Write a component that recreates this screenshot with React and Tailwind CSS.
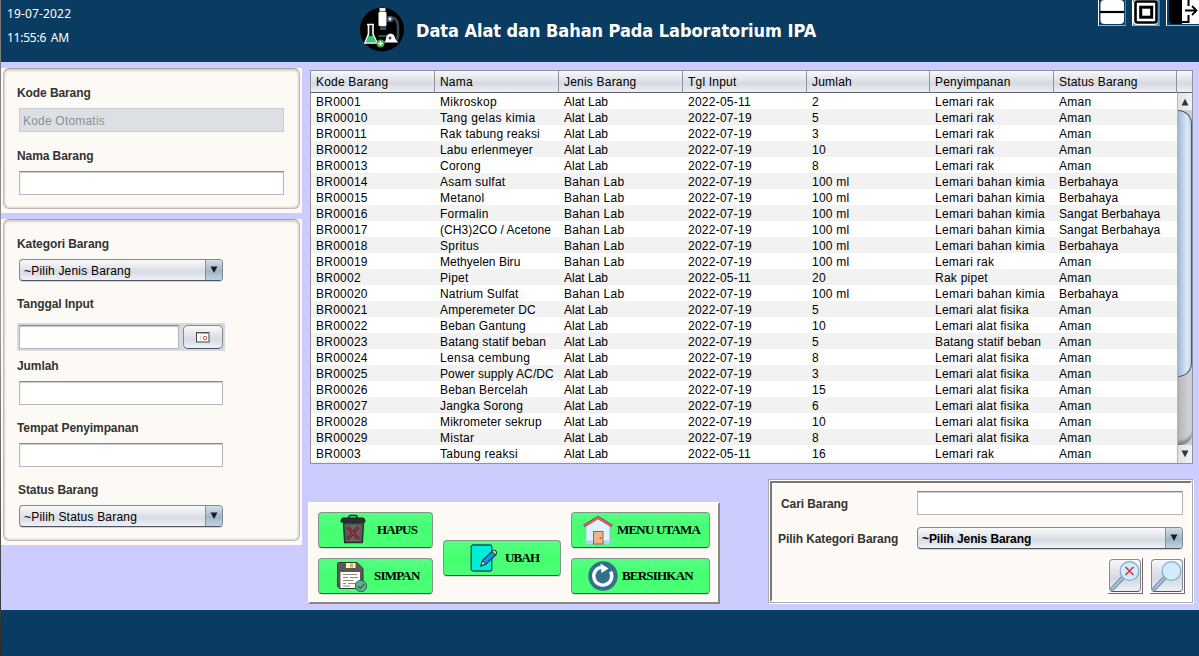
import React from "react";

const rows = [
  ["BR0001", "Mikroskop", "Alat Lab", "2022-05-11", "2", "Lemari rak", "Aman"],
  ["BR00010", "Tang gelas kimia", "Alat Lab", "2022-07-19", "5", "Lemari rak", "Aman"],
  ["BR00011", "Rak tabung reaksi", "Alat Lab", "2022-07-19", "3", "Lemari rak", "Aman"],
  ["BR00012", "Labu erlenmeyer", "Alat Lab", "2022-07-19", "10", "Lemari rak", "Aman"],
  ["BR00013", "Corong", "Alat Lab", "2022-07-19", "8", "Lemari rak", "Aman"],
  ["BR00014", "Asam sulfat", "Bahan Lab", "2022-07-19", "100 ml", "Lemari bahan kimia", "Berbahaya"],
  ["BR00015", "Metanol", "Bahan Lab", "2022-07-19", "100 ml", "Lemari bahan kimia", "Berbahaya"],
  ["BR00016", "Formalin", "Bahan Lab", "2022-07-19", "100 ml", "Lemari bahan kimia", "Sangat Berbahaya"],
  ["BR00017", "(CH3)2CO / Acetone", "Bahan Lab", "2022-07-19", "100 ml", "Lemari bahan kimia", "Sangat Berbahaya"],
  ["BR00018", "Spritus", "Bahan Lab", "2022-07-19", "100 ml", "Lemari bahan kimia", "Berbahaya"],
  ["BR00019", "Methyelen Biru", "Bahan Lab", "2022-07-19", "100 ml", "Lemari rak", "Aman"],
  ["BR0002", "Pipet", "Alat Lab", "2022-05-11", "20", "Rak pipet", "Aman"],
  ["BR00020", "Natrium Sulfat", "Bahan Lab", "2022-07-19", "100 ml", "Lemari bahan kimia", "Berbahaya"],
  ["BR00021", "Amperemeter DC", "Alat Lab", "2022-07-19", "5", "Lemari alat fisika", "Aman"],
  ["BR00022", "Beban Gantung", "Alat Lab", "2022-07-19", "10", "Lemari alat fisika", "Aman"],
  ["BR00023", "Batang statif beban", "Alat Lab", "2022-07-19", "5", "Batang statif beban", "Aman"],
  ["BR00024", "Lensa cembung", "Alat Lab", "2022-07-19", "8", "Lemari alat fisika", "Aman"],
  ["BR00025", "Power supply AC/DC", "Alat Lab", "2022-07-19", "3", "Lemari alat fisika", "Aman"],
  ["BR00026", "Beban Bercelah", "Alat Lab", "2022-07-19", "15", "Lemari alat fisika", "Aman"],
  ["BR00027", "Jangka Sorong", "Alat Lab", "2022-07-19", "6", "Lemari alat fisika", "Aman"],
  ["BR00028", "Mikrometer sekrup", "Alat Lab", "2022-07-19", "10", "Lemari alat fisika", "Aman"],
  ["BR00029", "Mistar", "Alat Lab", "2022-07-19", "8", "Lemari alat fisika", "Aman"],
  ["BR0003", "Tabung reaksi", "Alat Lab", "2022-05-11", "16", "Lemari rak", "Aman"],
];

const headers = ["Kode Barang", "Nama", "Jenis Barang", "Tgl Input", "Jumlah", "Penyimpanan", "Status Barang"];
const gridCols = "grid grid-cols-[124px_124px_124px_124px_123px_124px_123px]";

const tracking = {
  "Lemari bahan kimia": "tracking-[0.29px]",
  "Alat Lab": "tracking-[0px]",
  "Lemari rak": "tracking-[0.25px]",
  "Lemari alat fisika": "tracking-[0.21px]",
  "Tang gelas kimia": "tracking-[0.38px]",
  "Rak tabung reaksi": "tracking-[0.19px]",
  "Labu erlenmeyer": "tracking-[0.2px]",
  "(CH3)2CO / Acetone": "tracking-[0.05px]",
  "Methyelen Biru": "tracking-[0.02px]",
  "Natrium Sulfat": "tracking-[0.18px]",
  "Amperemeter DC": "tracking-[0.18px]",
  "Beban Gantung": "tracking-[0.14px]",
  "Batang statif beban": "tracking-[0.14px]",
  "Lensa cembung": "tracking-[0.38px]",
  "Power supply AC/DC": "tracking-[0.1px]",
  "Beban Bercelah": "tracking-[0.18px]",
  "Jangka Sorong": "tracking-[0.18px]",
  "Mikrometer sekrup": "tracking-[0.14px]",
  "Sangat Berbahaya": "tracking-[0.12px]",
  "Berbahaya": "tracking-[0.14px]",
};

function Label({ children, className = "" }) {
  return <div className={`h-4 text-[12px] font-bold leading-4 text-[#333] whitespace-nowrap ${className}`}><span className="tracking-[-0.09px]">{children}</span></div>;
}

function Field({ className = "" }) {
  return (
    <div className={`h-6 border border-[#b5b7bb] border-t-[#85888e] bg-white shadow-[inset_0_1px_1px_#c9cbce] ${className}`} />
  );
}

function Combo({ text, className = "", bold = false }) {
  return (
    <div className={`flex h-[22px] overflow-hidden rounded-[4px] border border-[#85898f] border-b-[#4d5463] bg-linear-to-b from-[#f9fafb] via-[#d8dbe2] via-60% to-[#eef1f6] shadow-[0_1px_0_#d0d2d6] ${className}`}>
      <div className={`flex-1 pl-1 text-[12px] leading-[22px] text-black whitespace-nowrap ${bold ? "font-bold tracking-[-0.1px]" : "tracking-[0.2px]"}`}>{text}</div>
      <div className="flex w-[17px] items-center justify-center border-l border-[#7795b0] bg-linear-to-b from-[#d3dfe9] via-[#9fb5c9] via-55% to-[#bdd3e6]">
        <svg width="8" height="8" viewBox="0 0 8 8"><path d="M0.5 0.5h7L4 7z" fill="#1c1c1c" /></svg>
      </div>
    </div>
  );
}

function Panel({ children, className = "" }) {
  return (
    <div className={`bg-[#fdfaf5] pr-[2px] pl-[2px] ${className}`}>
      <div className="h-full rounded-[6px] border border-[#bdb9b5] border-t-[#a5a19e] bg-[#fdfaf5] pl-[13px] shadow-[inset_0_2px_2px_#d5d1cd,inset_1px_-1px_2px_#dcd8d4,inset_-1px_0_2px_#dcd8d4]">
        {children}
      </div>
    </div>
  );
}

function GreenButton({ icon, children, className = "" }) {
  return (
    <div className={`flex h-9 items-center rounded-[4px] border border-[#7f9688] border-b-[#4a5060] bg-linear-to-b from-[#55ff82] via-[#44ff70] via-50% to-[#4cff79] font-['Liberation_Serif',serif] text-[13px] font-bold text-black shadow-[0_1px_0_#dcdad6] ${className}`}>
      {icon}
      <span className="whitespace-nowrap leading-4 tracking-[-0.8px]">{children}</span>
    </div>
  );
}

const TrashIcon = () => (
  <svg className="mr-[10px] shrink-0" width="27" height="32" viewBox="0 0 27 32">
    <path d="M9 4.500V2.500Q9 1.500 10.500 1.500h5Q17 1.500 17 2.500V4.500" fill="none" stroke="#222" strokeWidth="1.400" />
    <path d="M3.500 9h20L22.300 28.500H4.700z" fill="#5a5a5a" stroke="#2a2a2a" strokeWidth="1.400" />
    <path d="M7 11h13L19 27H8z" fill="#646464" />
    <path d="M2.500 4h21l1.500 2.500V8h-24V6.500z" fill="#2f3133" stroke="#1c1c1c" />
    <path d="M7.500 13l11 12M18.500 13l-11 12" stroke="#2d1518" strokeWidth="2.600" />
    <path d="M7.500 13l11 12M18.500 13l-11 12" stroke="#c8324a" strokeWidth="1.300" />
  </svg>
);

const FloppyIcon = () => (
  <svg className="mr-[6px] shrink-0" width="32" height="32" viewBox="0 0 32 32">
    <path d="M2.500 2.500H21l6 6v20H4L1.500 26.500V3.500z" fill="#5a5858" stroke="#343434" />
    <rect x="10" y="3" width="9.500" height="5" fill="#fff3ae" /><rect x="14" y="3.500" width="3" height="4" fill="#c9b45d" />
    <rect x="4.500" y="12" width="19.500" height="16" fill="#fffdf5" />
    <path d="M7 14.500h14M7 17.500h5m2 0h8M7 20.500h10M7 23.500h3m2 0h8M7 26h7" stroke="#8d8b86" />
    <circle cx="25" cy="26" r="5.700" fill="#58b28b" stroke="#37655a" />
    <path d="M22 26l2.300 2.300 4-4.300" fill="none" stroke="#315d52" strokeWidth="1.200" />
  </svg>
);

const EditIcon = () => (
  <svg className="mr-[7px] shrink-0" width="28" height="30" viewBox="0 0 28 30">
    <rect x="1.200" y="2" width="20.600" height="26" rx="2" fill="#00eed9" stroke="#0c5365" strokeWidth="1.300" />
    <path d="M13 17L22.500 8l3.500 3.500L16 21l-5 2z" fill="#1497e6" stroke="#0b395a" strokeWidth="1.200" />
    <path d="M12.500 17.500l3.300 3.500-5 2z" fill="#ffc568" stroke="#0b395a" />
    <path d="M22 8.500l1.800-1.500q3 .3 3 3l-1.600 1.800z" fill="#ffc94d" stroke="#0b395a" />
  </svg>
);

const HouseIcon = () => (
  <svg className="mr-1 shrink-0" width="30" height="32" viewBox="0 0 30 32">
    <path d="M3 12L15 3l12 9v18H3z" fill="#dff3ff" stroke="#9fc0d6" />
    <path d="M3.500 26.500h23v3h-23z" fill="#a6d5f3" />
    <rect x="10.500" y="17.500" width="9.500" height="12.500" fill="#f2b283" stroke="#95663f" />
    <circle cx="17.500" cy="24" r=".8" fill="#6b3c1d" />
    <path d="M1 12L15 3.500 29 12" fill="none" stroke="#88404a" strokeWidth="3" />
    <path d="M1.300 12L15 3.700 28.700 12" fill="none" stroke="#e7636b" strokeWidth="1.800" />
  </svg>
);

const RefreshIcon = () => (
  <svg className="mr-1 shrink-0" width="30" height="30" viewBox="0 0 30 30">
    <circle cx="15" cy="15" r="14.700" fill="#34708a" />
    <path d="M22.200 10A9 9 0 1 1 13.500 6.200" transform="rotate(4 15 15)" fill="none" stroke="#fff" strokeWidth="3.400" />
    <path d="M12.500 2.500l8 5-7 4.500z" fill="#fff" />
  </svg>
);

function SearchButton({ cross }) {
  return (
    <div className="h-[37px] w-9 border-t-2 border-r border-b border-l-2 border-white border-r-[#6c6c6c] border-b-[#6c6c6c] bg-[#fdfaf5]">
      <div className="h-[33px] w-[32px] rounded-[4px] border border-[#868a92] border-b-[#4d5463] bg-linear-to-b from-[#f7f8fa] via-[#d5d8e0] via-60% to-[#eceff5]">
        <svg width="30" height="31" viewBox="0 0 30 31">
          <path d="M2.500 28.500L13 17.500" stroke="#65879e" strokeWidth="4" strokeLinecap="round" />
          <path d="M2.500 28.500L13 17.500" stroke="#a9c4d6" strokeWidth="2.400" strokeLinecap="round" />
          <circle cx="19.500" cy="11" r="9.400" fill="#d2ecff" stroke="#84a9c3" strokeWidth="1.200" />
          {cross && <path d="M15.500 7l8 8M23.500 7l-8 8" stroke="#d23c40" strokeWidth="1.700" />}
        </svg>
      </div>
    </div>
  );
}

function Logo() {
  return (
    <svg className="ml-[288px] mt-[7px] shrink-0" width="44" height="45" viewBox="0 0 44 45">
      <circle cx="22" cy="22.500" r="22" fill="#000" />
      <path d="M32 11h2q4 3 4 8v9q0 4-3 6" fill="none" stroke="#34495a" strokeWidth="2.600" />
      <path d="M18.500 29h9M21 20h4v2h-4z" stroke="#3a4c5c" strokeWidth="2" fill="none" />
      <rect x="19.500" y="1" width="6" height="3.500" fill="#e9eef1" />
      <rect x="18.500" y="5" width="8" height="14" rx="1" fill="#fff" />
      <circle cx="30" cy="12" r="3.300" fill="#465b6b" /><circle cx="30" cy="12" r="1.400" fill="#fff" />
      <path d="M24 35.500l1.500-2q1-7 5-7t5 6l3 3z" fill="#fff" /><circle cx="30" cy="31" r="1.500" fill="#34495a" />
      <path d="M7 17.500h7M8.500 18v9L5 36h12l-4-9v-9" fill="#101820" stroke="#fff" strokeWidth="1.600" />
      <path d="M8.500 29h4.800l2.700 6H6z" fill="#2ecc71" />
      <circle cx="20.500" cy="36.500" r="4" fill="#43a847" />
      <path d="M18 36.500h5M20.500 34v5" stroke="#fff" strokeWidth="1.300" />
    </svg>
  );
}

function WindowButtons() {
  const box = "h-[26px] shrink-0 border-l border-b border-r border-l-white border-b-[#a9a9a9] border-r-[#77797b]";
  return (
    <div className="ml-auto flex h-[26px] gap-[6px]">
      <div className={`w-7 ${box}`}>
        <svg width="26" height="25" viewBox="0 0 26 25"><rect x="1.500" y="0" width="23.500" height="24" rx="4" fill="#fff" /><path d="M1 12h24" stroke="#000" strokeWidth="2.200" /></svg>
      </div>
      <div className={`w-7 ${box}`}>
        <svg width="26" height="25" viewBox="0 0 26 25">
          <rect width="26" height="25" fill="#4f8fc5" /><rect x="0" y="0" width="25" height="25" rx="4" fill="#fff" />
          <rect x="2.500" y="1.500" width="21" height="21" rx="2" fill="#fff" stroke="#000" strokeWidth="2.600" />
          <rect x="7.700" y="7.200" width="11" height="10" fill="#fff" stroke="#000" strokeWidth="3" />
        </svg>
      </div>
      <div className="h-[26px] w-[33px] border-b border-l border-b-[#a9a9a9] border-l-white">
        <svg width="32" height="25" viewBox="0 0 32 25">
          <rect x="12" y="-2" width="22" height="26" rx="4" fill="#fff" />
          <path d="M2 0h13v24H6q-3 0-4-4z" fill="#000" />
          <path d="M21.500 0v6M15 22h6.500v-7" fill="none" stroke="#000" strokeWidth="2" />
          <path d="M18 10.500h11M25 6l4.500 4.500-4.500 4.500" fill="none" stroke="#000" strokeWidth="1.800" />
        </svg>
      </div>
    </div>
  );
}

function Scrollbar() {
  return (
    <div className="flex w-[15px] flex-col border-l border-[#b3b5ba] bg-[#cdced4]">
      <div className="flex h-[17px] items-center justify-center bg-linear-to-r from-[#dfe1e5] to-[#f2f3f5]">
        <svg width="8" height="8" viewBox="0 0 8 8"><path d="M.5 7.500h7L4 .8z" fill="#333" /></svg>
      </div>
      <div className="h-[267px] rounded-r-[14px] border-t border-r border-b border-[#3c5870] bg-linear-to-r from-[#9fb9d0] via-[#dbeaf7] via-70% to-[#b9d3ea]" />
      <div className="flex-1 rounded-br-[12px] border-b border-[#777] bg-linear-to-r from-[#b5b6bb] to-[#d6d7dc] shadow-[inset_0_-4px_3px_-1px_#85868a]" />
      <div className="flex h-[18px] items-center justify-center bg-linear-to-r from-[#dfe1e5] to-[#f2f3f5]">
        <svg width="8" height="8" viewBox="0 0 8 8"><path d="M.5 .5h7L4 7.200z" fill="#333" /></svg>
      </div>
    </div>
  );
}

function DataTable() {
  return (
    <div className="ml-[2px] mt-2 flex h-[394px] w-[883px] flex-col overflow-hidden border border-[#8f929c] bg-white text-[12px] text-black">
      <div className="flex h-[22px] shrink-0 border-b border-[#5e626c] bg-linear-to-b from-[#f7f8fa] via-[#d7dae1] via-60% to-[#eceff4]">
        <div className={gridCols}>
          {headers.map((h) => (
            <div key={h} className="border-r border-[#8f929c] pl-[5px] leading-[22px] tracking-[0.2px] whitespace-nowrap">{h}</div>
          ))}
        </div>
      </div>
      <div className="flex min-h-0 flex-1">
        <div className="w-[866px] overflow-hidden">
          {rows.map((r) => (
            <div key={r[0]} className={`h-4 odd:bg-white even:bg-[#f2f2f2] ${gridCols}`}>
              {r.map((c, i) => (
                <div key={i} className={`pl-[5px] leading-[18px] whitespace-nowrap ${tracking[c] || "tracking-[0.25px]"}`}>{c}</div>
              ))}
            </div>
          ))}
          <div className="h-4 bg-[#f2f2f2]" />
        </div>
        <Scrollbar />
      </div>
    </div>
  );
}

export default function App() {
  return (
    <div className="flex h-[656px] w-[1199px] overflow-hidden font-['Liberation_Sans',Arial,sans-serif]">
      <div className="w-px bg-linear-to-b from-[#777] via-[#999] via-50% to-[#2a2a2a]" />
      <div className="flex w-[1198px] flex-col bg-[#ccccff]">
        <header className="flex h-[62px] shrink-0 bg-[#0a3c62] text-white">
          <div className="w-[71px] shrink-0 pl-[6px] pt-[2px] font-['Noto_Sans',sans-serif] text-[12px] leading-6 whitespace-nowrap">
            <div className="tracking-[0.15px]">19-07-2022</div>
            <div className="tracking-[-0.25px] [word-spacing:2px]">11:55:6 AM</div>
          </div>
          <Logo />
          <h1 className="ml-3 mt-[19px] font-['DejaVu_Sans_Condensed','DejaVu_Sans',sans-serif] text-[18px] font-bold leading-6 tracking-[-0.05px] whitespace-nowrap">Data Alat dan Bahan Pada Laboratorium IPA</h1>
          <WindowButtons />
        </header>

        <main className="flex h-[548px]">
          <aside className="w-[301px] shrink-0 pt-[6px]">
            <Panel className="h-[145px] pb-1">
              <Label className="mt-4">Kode Barang</Label>
              <div className="ml-[2px] mt-[7px] h-6 w-[265px] border border-[#c9cdd4] bg-[#dce0e4] pl-[3px] text-[12px] leading-[24px] tracking-[0.2px] text-[#8e8f91]">Kode Otomatis</div>
              <Label className="mt-4">Nama Barang</Label>
              <Field className="ml-[2px] mt-[7px] w-[265px]" />
            </Panel>
            <Panel className="mt-[6px] h-[326px] pb-1">
              <Label className="mt-4">Kategori Barang</Label>
              <Combo className="ml-[2px] mt-[7px] w-[204px]" text="~Pilih Jenis Barang" />
              <Label className="mt-[15px]">Tanggal Input</Label>
              <div className="mt-[11px] flex h-7 w-[208px] gap-1 bg-[#d6d9df] p-[2px]">
                <Field className="w-[160px]" />
                <div className="flex h-6 w-10 items-center justify-center rounded-[5px] border border-[#85898f] border-b-[#4d5463] bg-linear-to-b from-[#f9fafb] via-[#d8dbe2] via-60% to-[#eef1f6]">
                  <svg width="14" height="11" viewBox="0 0 14 11">
                    <rect x=".5" y=".5" width="12.500" height="9.500" fill="#fff" stroke="#444" />
                    <path d="M1 1.300h4" stroke="#e39a45" /><path d="M5 1.300h7" stroke="#5b9dd9" />
                    <path d="M4.500 3v6" stroke="#d8d8d8" />
                    <circle cx="9" cy="6" r="1.700" fill="none" stroke="#e0504a" />
                  </svg>
                </div>
              </div>
              <Label className="mt-[7px]">Jumlah</Label>
              <Field className="ml-[2px] mt-[7px] w-[204px]" />
              <Label className="mt-[15px]">Tempat Penyimpanan</Label>
              <Field className="ml-[2px] mt-[7px] w-[204px]" />
              <Label className="ml-px mt-[15px]">Status Barang</Label>
              <Combo className="ml-[2px] mt-[7px] w-[204px]" text="~Pilih Status Barang" />
            </Panel>
          </aside>

          <section className="ml-[6px] w-[891px]">
            <DataTable />
            <div className="mt-[15px] flex">
              <div className="mt-[23px] flex h-[102px] w-[412px] items-center border-2 border-white border-r-[#8a8884] border-b-[#8a8884] bg-[#fdfaf5] pl-2">
                <div className="flex w-[115px] flex-col gap-[10px]">
                  <GreenButton className="pl-[21px]" icon={<TrashIcon />}>HAPUS</GreenButton>
                  <GreenButton className="pl-[17px]" icon={<FloppyIcon />}>SIMPAN</GreenButton>
                </div>
                <GreenButton className="ml-[10px] mt-[10px] w-[118px] pl-[26px]" icon={<EditIcon />}>UBAH</GreenButton>
                <div className="ml-[10px] flex w-[139px] flex-col gap-[10px]">
                  <GreenButton className="pl-[11px]" icon={<HouseIcon />}>MENU UTAMA</GreenButton>
                  <GreenButton className="pl-4" icon={<RefreshIcon />}>BERSIHKAN</GreenButton>
                </div>
              </div>

              <div className="ml-12 h-[125px] w-[426px] border border-[#a9a9a9] border-r-white border-b-white bg-white">
                <div className="h-[123px] w-[424px] border border-r-[#a9a9a9] border-b-[#a9a9a9] border-l-white border-t-white">
                  <div className="h-[121px] border-t-2 border-l-2 border-[#77787b] bg-[#fdfaf5] border-r-2 border-b-2 border-r-white border-b-white">
                    <div className="flex pt-2">
                      <Label className="ml-[9px] mt-[5px] w-[136px]">Cari Barang</Label>
                      <Field className="w-[266px]" />
                    </div>
                    <div className="mt-3 flex">
                      <Label className="ml-[6px] mt-1 w-[139px]">Pilih Kategori Barang</Label>
                      <Combo className="w-[266px]" text="~Pilih Jenis Barang" bold />
                    </div>
                    <div className="mr-[5px] mt-2 flex justify-end gap-[6px]">
                      <SearchButton cross />
                      <SearchButton />
                    </div>
                  </div>
                </div>
              </div>
            </div>
          </section>
        </main>
        <footer className="h-[46px] shrink-0 bg-[#0a3c62]" />
      </div>
    </div>
  );
}
